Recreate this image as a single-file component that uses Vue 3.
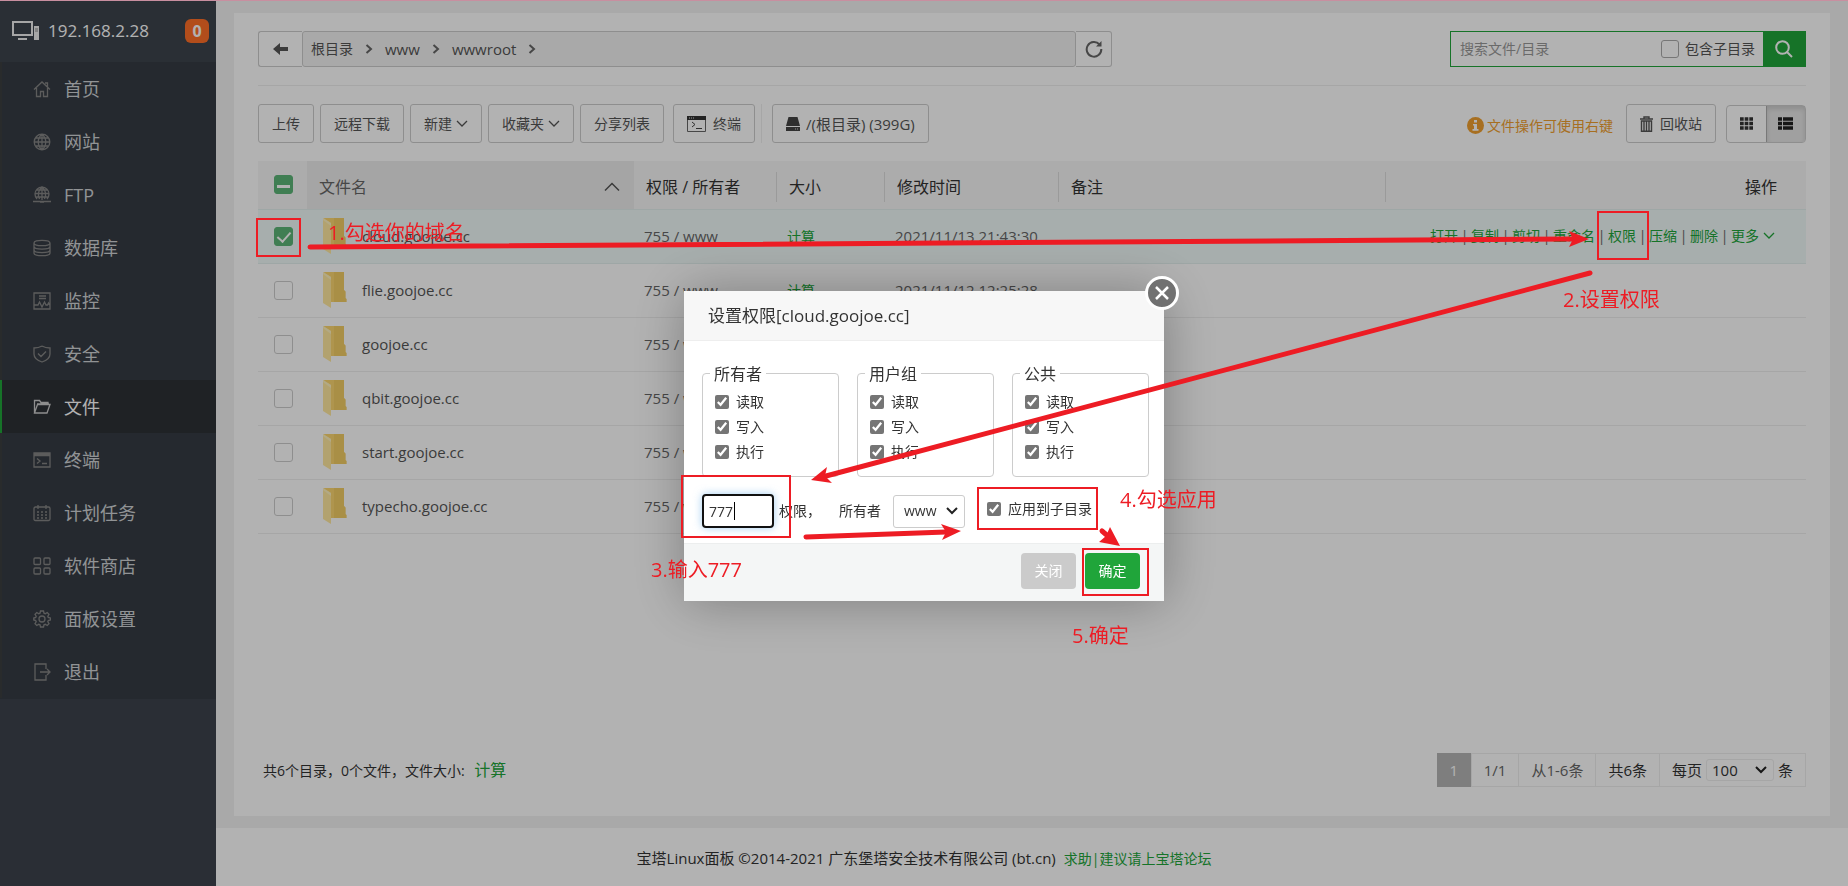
<script setup>
import { ref } from 'vue'

const menu = [
  { name: '首页', d: 'M1 9.5 9 2l8 7.5M3.5 8v8.5h4v-5h3v5h4V8M12 3h2.5v3.5' },
  { name: '网站', d: 'M9 1.2a7.8 7.8 0 1 0 0 15.6A7.8 7.8 0 1 0 9 1.2M1.2 9h15.6M9 1.2v15.6M9 1.2c-5 4-5 11.600 0 15.6M9 1.2c5 4 5 11.600 0 15.6M2.500 5h13M2.500 13h13' },
  { name: 'FTP', d: 'M4 13A7 7 0 1 1 14 13M2 7.500h14M9 1v13M9 1c-4 3.500-4 8.500-2.500 12M9 1c4 3.500 4 8.500 2.500 12M3.500 4h11M3.500 11h11M0 15.500h18M7 16h4' },
  { name: '数据库', d: 'M1 4c0-3.600 16-3.600 16 0s-16 3.600-16 0v10c0 3.600 16 3.600 16 0V4M1 7.500c0 3.500 16 3.500 16 0M1 11c0 3.500 16 3.500 16 0' },
  { name: '监控', d: 'M1 1h16v16H1zM6 4h7M6 6.500h7M1 13h4l1.500-3L9 15l2.500-5 1.500 3h1.500l1-2 1 2' },
  { name: '安全', d: 'M9 1c2.500 1.500 5 2 8 2v6c0 4-3.500 6.500-8 8-4.500-1.500-8-4-8-8V3c3 0 5.500-.5 8-2M5 8.500l3 3 5-5' },
  { name: '文件', d: 'M1.500 15V2.500h5l1.500 2h7V7M1.500 15h12.500L17 6.500H4.500zM4 6h12' },
  { name: '终端', d: 'M1 2h16v14H1zM1 3h16M1 4.500h16M4 7.500l3 2.500-3 2.500M9 12.500h5' },
  { name: '计划任务', d: 'M2.500 3h13Q17 3 17 4.500V15q0 1.500-1.500 1.500h-13Q1 16.500 1 15V4.500Q1 3 2.500 3M5 1v4M13 1v4M4 8h2M8 8h2M12 8h2M4 11h2M8 11h2M12 11h2M4 14h2M8 14h2M12 14h2' },
  { name: '软件商店', d: 'M2 1h4.500q1 0 1 1v4.500q0 1-1 1H2q-1 0-1-1V2q0-1 1-1M12 1h4q1 0 1 1v4.500q0 1-1 1h-4q-1 0-1-1V2q0-1 1-1M2 11h4.500q1 0 1 1v4q0 1-1 1H2q-1 0-1-1v-4q0-1 1-1M12 11h4q1 0 1 1v4q0 1-1 1h-4q-1 0-1-1v-4q0-1 1-1' },
  { name: '面板设置', d: 'M7.500 1h3l.5 2.200 1.300.5 1.900-1.200 1.800 1.800-1.200 1.900.5 1.300 2.200.5v2l-2.200.5-.5 1.300 1.200 1.900-1.800 1.800-1.900-1.200-1.300.5-.5 2.200h-3L7 14.800l-1.300-.5-1.900 1.200L2 13.700l1.200-1.900-.5-1.300L.8 10V8l1.900-.5.5-1.300L2 4.300l1.800-1.800 1.900 1.200L7 3.200zM9 6a3 3 0 1 0 0 6 3 3 0 1 0 0-6' },
  { name: '退出', d: 'M13 6V1H2v16h11v-5M7 9h10M14 6l3 3-3 3' },
]
const active = ref('文件')
const crumbs = ['根目录', 'www', 'wwwroot']
const columns = ['权限 / 所有者', '大小', '修改时间', '备注']
const actions = ['打开', '复制', '剪切', '重命名', '权限', '压缩', '删除', '更多']
const files = ref([
  { name: 'cloud.goojoe.cc', time: '2021/11/13 21:43:30', on: true },
  { name: 'flie.goojoe.cc', time: '2021/11/12 12:25:28', on: false },
  { name: 'goojoe.cc', time: '', on: false },
  { name: 'qbit.goojoe.cc', time: '', on: false },
  { name: 'start.goojoe.cc', time: '', on: false },
  { name: 'typecho.goojoe.cc', time: '', on: false },
])
const groups = ['所有者', '用户组', '公共']
const rights = ['读取', '写入', '执行']
const mode = ref('777')
const applyAll = ref(true)
</script>

<template>
  <div class="page">
    <aside class="side">
      <header class="host">
        <svg width="27" height="20" viewBox="0 0 27 20"><path d="M1 1h19v13H1z" fill="none" stroke="#eee" stroke-width="2" /><path d="M6 17h9v2H6zM22 5h5v14h-5z" fill="#eee" /><path d="M23 8h3M23 10h3" stroke="#888" /></svg>
        <span>192.168.2.28</span>
        <b class="badge">0</b>
      </header>
      <nav class="menu">
        <a v-for="m in menu" :key="m.name" href="#" :class="{ active: m.name === active }">
          <svg width="18" height="18" viewBox="0 0 18 18"><path :d="m.d" /></svg>{{ m.name }}
        </a>
      </nav>
    </aside>

    <main class="main">
      <section class="panel">
        <div class="top">
          <div class="path">
            <button class="back" aria-label="返回"><svg width="15" height="12" viewBox="0 0 15 12"><path d="M0 6 7 0v4h8v4H7v4z" fill="#555" /></svg></button>
            <div class="crumbs">
              <template v-for="(c, i) in crumbs" :key="c">
                <a href="#" :class="{ dir: i > 0 }">{{ c }}</a><svg width="8" height="10" viewBox="0 0 8 10"><path d="M1.500 1 6 5l-4.500 4" fill="none" stroke="#666" stroke-width="2" /></svg>
              </template>
            </div>
            <button class="refresh" aria-label="刷新"><svg width="18" height="18" viewBox="0 0 18 18"><path d="M14.500 4.500A7.300 7.300 0 1 0 16.300 9" fill="none" stroke="#666" stroke-width="2" /><path d="M16.500 1v5.500H11z" fill="#666" /></svg></button>
          </div>
          <div class="search">
            <input type="text" aria-label="搜索" placeholder="搜索文件/目录">
            <label><input type="checkbox" class="box">包含子目录</label>
            <button aria-label="搜索"><svg width="18" height="18" viewBox="0 0 18 18"><circle cx="7.500" cy="7.500" r="6.300" fill="none" stroke="#fff" stroke-width="2" /><path d="m12 12 5 5" stroke="#fff" stroke-width="2" /></svg></button>
          </div>
        </div>

        <div class="tools">
          <button class="btn">上传</button>
          <button class="btn">远程下载</button>
          <button class="btn">新建<svg class="chev" viewBox="0 0 12 8"><path d="m1 1 5 5 5-5" /></svg></button>
          <button class="btn">收藏夹<svg class="chev" viewBox="0 0 12 8"><path d="m1 1 5 5 5-5" /></svg></button>
          <button class="btn">分享列表</button>
          <button class="btn term"><svg width="19" height="16" viewBox="0 0 19 16"><path d="M.5.5h18v15H.5z" fill="none" stroke="#666" /><path d="M0 0h19v4H0z" fill="#333" /><path d="M2 2h1M4 2h1M6 2h1" stroke="#ddd" /><path d="m5 6 3 2.500L5 11M9 12.500h6" fill="none" stroke="#444" /></svg>终端</button>
          <span class="split"></span>
          <button class="btn disk"><svg width="14" height="14" viewBox="0 0 14 14"><path d="M2.500 0h9L14 9H0zM0 10h14v4H0z" fill="#444" /><path d="M9 12h1M11 12h1" stroke="#ccc" /></svg>/(根目录) (399G)</button>
          <span class="tip"><svg width="17" height="17" viewBox="0 0 17 17"><circle cx="8.500" cy="8.500" r="8.500" fill="#f0a030" /><path d="M7 3h3v2.500H7zM6 7h4v5h1.500v1.800H5.500V12H7V8.500H6z" fill="#fff" /></svg>文件操作可使用右键</span>
          <button class="btn bin"><svg width="13" height="16" viewBox="0 0 13 16"><path d="M0 3h13M4 2.500V1h5v1.500M1.500 5h10v10.300h-10zM4 5v10M6.500 5v10M9 5v10" fill="none" stroke="#555" stroke-width="1.400" /></svg>回收站</button>
          <div class="views">
            <button aria-label="图标"><svg width="13" height="13" viewBox="0 0 13 13"><path d="M0 2h13M0 6.500h13M0 11h13" stroke="#333" stroke-width="3.500" stroke-dasharray="3.700 .95" /></svg></button>
            <button class="on" aria-label="列表"><svg width="15" height="13" viewBox="0 0 15 13"><path d="M0 2h4M5 2h10M0 6.500h4M5 6.500h10M0 11h4M5 11h10" stroke="#222" stroke-width="3.500" /></svg></button>
          </div>
        </div>

        <table>
          <colgroup><col class="c-box"><col class="c-name"><col class="c-perm"><col class="c-size"><col class="c-time"><col class="c-name"><col></colgroup>
          <thead>
            <tr>
              <th class="cell-box"><input type="checkbox" class="box part" aria-label="全选"></th>
              <th class="sorted"><div>文件名<svg width="16" height="10" viewBox="0 0 16 10"><path d="m1 8.500 7-7 7 7" fill="none" stroke="#555" stroke-width="1.500" /></svg></div></th>
              <th v-for="c in columns" :key="c"><div class="bar">{{ c }}</div></th>
              <th class="ops">操作</th>
            </tr>
          </thead>
          <tbody>
            <tr v-for="f in files" :key="f.name" :class="{ picked: f.on }">
              <td class="cell-box"><input v-model="f.on" type="checkbox" class="box" :aria-label="f.name"></td>
              <td class="name"><div><svg width="24" height="36" viewBox="0 0 24 36"><path d="M1 0h20v18l1.500 1.500V26l1 1v3H7z" fill="#fbd670" /><path d="M11 0h10v18l1.500 1.500V26l1 1v3H11z" fill="#edc75e" opacity=".6" /><path d="M0 0 8 5v31L0 31z" fill="#ffe9a0" /><path d="M0 0l8 5v3L0 2z" fill="#fff2c0" /></svg><a href="#">{{ f.name }}</a></div></td>
              <td>755 / www</td>
              <td><a href="#" class="green calc">计算</a></td>
              <td>{{ f.time }}</td>
              <td></td>
              <td class="ops"><div v-if="f.on"><template v-for="(a, i) in actions" :key="a"><i v-if="i">|</i><a href="#" class="green">{{ a }}</a></template><svg class="chev" viewBox="0 0 12 8"><path d="m1 1 5 5 5-5" /></svg></div></td>
            </tr>
          </tbody>
        </table>

        <div class="bottom">
          <p>共6个目录，0个文件，文件大小: <a href="#" class="green">计算</a></p>
          <div class="pager">
            <b>1</b><span>1/1</span><span>从1-6条</span><span class="dark">共6条</span>
            <label class="dark">每页<span class="sel"><select><option>100</option></select><svg viewBox="0 0 12 8"><path d="m1 1 5 5 5-5" /></svg></span>条</label>
          </div>
        </div>
      </section>
      <footer class="foot">宝塔Linux面板 ©2014-2021 广东堡塔安全技术有限公司 (bt.cn) <a href="#" class="green">求助|建议请上宝塔论坛</a></footer>
    </main>

    <div class="mask">
      <div class="dialog" role="dialog" aria-label="设置权限">
        <h2>设置权限[cloud.goojoe.cc]</h2>
        <button class="close" aria-label="关闭窗口"><svg width="14" height="14" viewBox="0 0 14 14"><path d="m1 1 12 12M13 1 1 13" stroke="#fff" stroke-width="2.500" /></svg></button>
        <div class="sets">
          <fieldset v-for="g in groups" :key="g">
            <legend>{{ g }}</legend>
            <label v-for="r in rights" :key="r"><input type="checkbox" checked>{{ r }}</label>
          </fieldset>
        </div>
        <div class="line">
          <label class="mode"><span class="field"><input v-model="mode" type="text"><i></i></span>权限，</label>
          <label class="owner">所有者<span class="sel"><select><option>www</option></select><svg viewBox="0 0 12 8"><path d="m1 1 5 5 5-5" /></svg></span></label>
          <label class="apply"><input v-model="applyAll" type="checkbox">应用到子目录</label>
        </div>
        <div class="acts"><button class="no">关闭</button><button class="yes">确定</button></div>
      </div>
    </div>

    <svg class="notes" width="1848" height="886" viewBox="0 0 1848 886">
      <g class="frames">
        <rect x="257" y="219" width="43" height="37" />
        <rect x="1598" y="212" width="50" height="47" />
        <rect x="682" y="476" width="108" height="61" />
        <rect x="978" y="488" width="119" height="41" />
        <rect x="1083" y="549" width="65" height="46" />
      </g>
      <g class="shafts">
        <path d="M310 247 1574 239" /><path d="M1590 273 826 476" /><path d="M806 537 946 532" /><path d="M1102 531 1109 537" />
      </g>
      <g class="heads">
        <path d="m1589 239-20 8 4-8-4-8z" /><path d="m811 480 16-13-2 9 7 7z" /><path d="m961 531-19 9 4-8-5-8z" /><path d="m1120 546-21-4 7-6 4-9z" />
      </g>
      <g class="words">
        <text x="328" y="240">1.勾选你的域名</text>
        <text x="1563" y="307">2.设置权限</text>
        <text x="651" y="577">3.输入777</text>
        <text x="1120" y="507">4.勾选应用</text>
        <text x="1072" y="643">5.确定</text>
      </g>
    </svg>
  </div>
</template>

<style>
body { background: #f3f3f3; }
</style>

<style scoped>
* { box-sizing: border-box; }
.page { position: relative; display: flex; min-height: 100vh; overflow: hidden; border-top: 1px solid #c88fa0; font: 14px/20px "Open Sans", "Noto Sans CJK SC", sans-serif; color: #333; background: #f3f3f3; }
a { color: inherit; text-decoration: none; }
button, input, select { font: inherit; color: inherit; margin: 0; }
button { padding: 0; cursor: pointer; }
svg { flex: none; }
.green { color: #20a53a; }

.side { width: 216px; flex: none; background: #3d434d; }
.host { display: flex; align-items: center; height: 61px; padding: 0 7px 2px 12px; color: #fff; font-size: 17px; background: #3d444d; }
.host span { margin-left: 9px; }
.badge { margin-left: auto; width: 24px; border-radius: 6px; background: #ff6f28; font-size: 16px; line-height: 24px; text-align: center; }
.menu { background: #363c44; padding-bottom: 1px; }
.menu a { display: flex; align-items: center; height: 53px; padding-left: 31px; border-left: 2px solid #3b3e40; font-size: 18px; color: #d0d3d6; }
.menu svg { margin-right: 13px; fill: none; stroke: #858585; stroke-width: 1.300; }
.menu .active { background: #2d3136; border-left-color: #20a53a; color: #fff; }
.menu .active svg { stroke: #ccc; }

.main { flex: 1; min-width: 0; display: flex; flex-direction: column; }
.panel { flex: 1; display: flex; flex-direction: column; margin: 12px 18px; padding: 18px 24px 29px; background: #fff; }
.top { display: flex; justify-content: space-between; padding-bottom: 18px; border-bottom: 1px solid #eee; }
.path { display: flex; width: 854px; height: 36px; color: #555; }
.path button { background: #fff; border: 1px solid #ccc; display: flex; align-items: center; justify-content: center; }
.back { width: 44px; border-radius: 3px 0 0 3px; border-right: 0 !important; }
.refresh { width: 36px; border-radius: 0 3px 3px 0; border-left: 0 !important; }
.crumbs { flex: 1; display: flex; align-items: center; gap: 12px; padding-left: 8px; background: #f3f3f3; border: 1px solid #ccc; border-radius: 3px; }
.crumbs .dir { font-size: 15px; }
.search { display: flex; width: 356px; border: 1px solid #20a53a; color: #555; }
.search > input { flex: 1; min-width: 0; border: 0; padding: 0 9px; background: none; outline: 0; }
.search > input::placeholder { color: #999; }
.search label { display: flex; align-items: center; gap: 6px; margin-right: 8px; }
.search button { width: 42px; background: #20a53a; border: 0; display: flex; align-items: center; justify-content: center; }
.box { appearance: none; position: relative; display: block; width: 19px; height: 19px; border: 1px solid #ccc; border-radius: 3px; background: #fff; }
.search .box { width: 18px; height: 18px; border-color: #aaa; }
.box:checked, .part { background: #5cb577; border-color: #5cb577; }
.box:checked::after { content: ""; position: absolute; left: 5px; top: 1px; width: 6px; height: 11px; border: solid #fff; border-width: 0 2px 2px 0; transform: rotate(42deg); }
.part::after { content: ""; position: absolute; left: 2px; top: 9px; width: 13px; height: 3px; background: #fff; }

.tools { display: flex; align-items: center; gap: 6px; padding: 18px 0; height: 75px; }
.btn { display: flex; align-items: center; height: 39px; padding: 0 13px; border: 1px solid #ccc; border-radius: 3px; background: #fff; color: #555; white-space: nowrap; }
.chev { width: 12px; height: 8px; margin-left: 4px; fill: none; stroke: currentColor; stroke-width: 1.300; }
.term { margin-left: 3px; gap: 7px; }
.split { width: 1px; height: 39px; background: #eee; }
.disk { margin-left: 4px; gap: 6px; font-size: 15px; }
.tip { display: flex; align-items: center; gap: 3px; margin-left: auto; margin-right: 7px; padding-top: 4px; color: #f0a030; }
.bin { gap: 7px; }
.views { display: flex; width: 80px; height: 38px; margin-left: 4px; border: 1px solid #ccc; border-radius: 4px; }
.views button { flex: 1; border: 0; background: none; display: flex; align-items: center; justify-content: center; }
.views .on { background: #e6e6e6; border-left: 1px solid #adadad; box-shadow: inset 0 3px 5px rgba(0, 0, 0, .125); }

table { width: 100%; table-layout: fixed; border-collapse: collapse; }
.c-box { width: 49px; } .c-name { width: 327px; } .c-perm { width: 143px; } .c-size { width: 108px; } .c-time { width: 174px; }
th { height: 48px; padding: 4px 0 0; background: #f6f6f6; font-weight: 400; font-size: 16px; text-align: left; color: #333; }
th .bar { display: flex; align-items: center; height: 30px; padding-left: 12px; border-right: 1px solid #ddd; }
th.ops { padding-right: 29px; text-align: right; }
.cell-box { padding: 0 0 0 16px; }
.sorted { background: #ededed; color: #666; }
.sorted div { display: flex; align-items: center; justify-content: space-between; padding: 0 14px 0 12px; }
td { height: 54px; padding: 0 0 0 10px; border-bottom: 1px solid #eee; font-size: 15px; color: #666; }
td.cell-box { padding-left: 16px; }
td.name { padding-left: 16px; }
.name div { display: flex; align-items: center; gap: 15px; color: #555; }
.calc { font-size: 14px; }
.picked td { background: #f0f9f8; border-top: 1px solid #e2efee; border-bottom-color: #e2efee; }
td.ops { padding: 0 31px 0 0; font-size: 14px; }
td.ops div { display: flex; justify-content: flex-end; align-items: center; color: #20a53a; }
td.ops i { width: 13px; text-align: center; font-style: normal; color: #666; }

.bottom { display: flex; align-items: center; justify-content: space-between; margin-top: auto; }
.bottom p { margin: 0; padding-left: 5px; }
.bottom .green { margin-left: 6px; font-size: 16px; }
.pager { display: flex; height: 34px; font-size: 15px; line-height: 32px; border: 1px solid #eee; color: #666; }
.pager b { width: 34px; margin: -1px 0 -1px -1px; line-height: 34px; background: #b5b5b5; color: #fff; font-weight: 400; text-align: center; }
.pager > span, .pager label { padding: 0 12px; border-left: 1px solid #eee; white-space: nowrap; }
.pager label { display: flex; align-items: center; gap: 4px; }
.pager .dark { color: #333; }
.sel { position: relative; display: inline-flex; align-items: center; }
.sel select { appearance: none; border: 1px solid #ccc; border-radius: 3px; background: #fff; }
.sel svg { position: absolute; right: 7px; width: 12px; height: 8px; fill: none; stroke: #222; stroke-width: 2; pointer-events: none; }
.pager .sel select { width: 68px; height: 22px; padding: 0 5px; border-color: #eee; line-height: 20px; }
.foot { height: 58px; padding-right: 216px; background: #fff; font-size: 15px; text-align: center; line-height: 60px; }
.foot a { margin-left: 4px; font-size: 14px; }

.mask { position: fixed; inset: 0; display: flex; align-items: center; justify-content: center; padding-top: 4px; background: rgba(0, 0, 0, .3); }
.page > .mask { top: 1px; }
.dialog { position: relative; width: 480px; background: #fff; box-shadow: 1px 1px 50px rgba(0, 0, 0, .3); }
h2 { margin: 0; height: 50px; padding-left: 24px; font-size: 17px; font-weight: 400; line-height: 50px; background: #f7f7f7; border-bottom: 1px solid #eee; }
.close { position: absolute; top: -15px; right: -15px; width: 34px; height: 34px; border: 3px solid #fff; border-radius: 50%; background: #717171; display: flex; align-items: center; justify-content: center; }
.sets { display: grid; grid-template-columns: repeat(3, 1fr); gap: 18px; padding: 22px 15px 0 18px; }
fieldset { min-width: 0; margin: 0; padding: 5px 12px 11px; border: 1px solid #ccc; border-radius: 4px; }
legend { padding: 0 4px; margin-left: -5px; font-size: 16px; line-height: 22px; }
.dialog input[type="checkbox"] { width: 14px; height: 14px; accent-color: #757575; }
fieldset label { display: flex; align-items: center; gap: 7px; height: 25px; }
.line { display: flex; align-items: center; height: 66px; padding: 3px 18px 0; }
.line label { display: flex; align-items: center; white-space: nowrap; }
.mode { width: 137px; gap: 5px; }
.field { position: relative; display: flex; }
.field input { width: 72px; height: 34px; padding: 0 5px; border: 2px solid #111; border-radius: 4px; outline: 0; background: #fff; box-shadow: 0 0 8px rgba(102, 175, 233, .6); }
.field i { position: absolute; left: 32px; top: 8px; width: 1px; height: 18px; background: #000; }
.owner { gap: 12px; width: 148px; }
.line .sel select { width: 72px; height: 33px; padding: 0 10px; }
.apply { gap: 7px; margin-bottom: 4px; }
.acts { display: flex; justify-content: flex-end; gap: 9px; height: 58px; padding: 9px 24px 0; background: #f4f6f6; border-top: 1px solid #eceeee; }
.acts button { width: 55px; height: 36px; border: 0; border-radius: 4px; color: #fff; }
.no { background: #cbcbcb; }
.yes { background: #20a53a; }

.notes { position: absolute; left: 0; top: -1px; pointer-events: none; }
.frames { fill: none; stroke: #ed1c24; stroke-width: 2; }
.shafts { fill: none; stroke: #ed1c24; stroke-width: 5; stroke-linecap: round; }
.heads, .words { fill: #ed1c24; }
.words { font-size: 20px; }
</style>
